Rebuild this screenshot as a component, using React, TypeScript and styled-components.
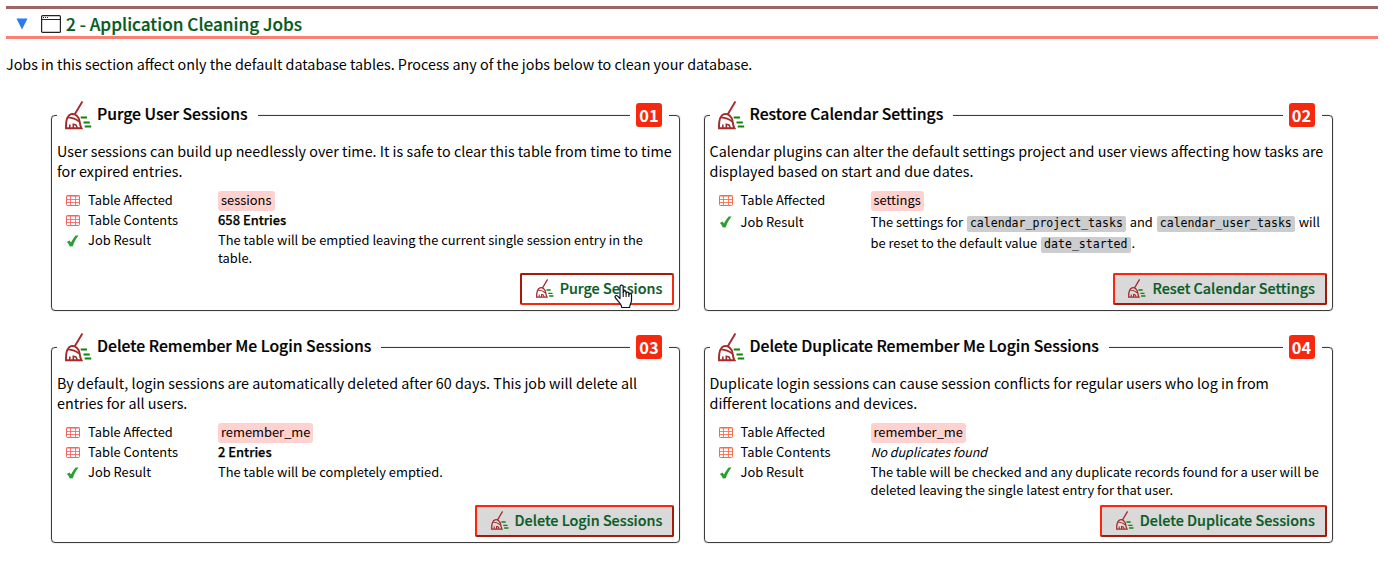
import React from 'react';
import styled, { createGlobalStyle } from 'styled-components';

const GlobalStyle = createGlobalStyle`
  * { box-sizing: border-box; }
  body {
    margin: 0;
    background: #fff;
    color: #000;
    font-family: "Noto Sans CJK SC", sans-serif;
    font-size: 14.33px;
    line-height: 20px;
  }
`;

const Page = styled.main`
  padding: 6px 6px 30px;
`;

const SectionHeader = styled.header`
  display: flex;
  align-items: center;
  height: 33px;
  padding-left: 9px;
  border-top: 3px solid #9c6666;
  border-bottom: 3px solid #fa8072;
`;

const Arrow = styled.svg`
  width: 12px;
  height: 12px;
  margin: 2px 13px 0 1px;
`;

const WindowGlyph = styled.svg`
  width: 20px;
  height: 18px;
  margin: 3px 5px 0 0;
`;

const SectionTitle = styled.h2`
  margin: 3px 0 0;
  font-size: 17.2px;
  font-weight: 500;
  line-height: 24px;
  color: #055a1c;
  -webkit-text-stroke: 0.2px;
`;

const Intro = styled.p`
  margin: 15px 0 0;
`;

const JobGrid = styled.section`
  display: grid;
  grid-template-columns: 629px 629px;
  grid-auto-rows: 196px;
  gap: 36px 23.5px;
  margin: 41px 0 0 45px;
`;

const Card = styled.article`
  display: flex;
  flex-direction: column;
  padding: 0 5px 5px;
  border: 1px solid #3c3c3c;
  border-radius: 4px;
  box-shadow: 0 0 1px rgba(0, 0, 0, 0.6);
`;

const CardHeader = styled.div`
  display: flex;
  justify-content: space-between;
  align-items: center;
  height: 36px;
  margin-top: -19px;
`;

const Legend = styled.h3`
  display: flex;
  align-items: center;
  gap: 5px;
  margin: 0;
  padding: 0 10px 0 8px;
  background: #fff;
  font-size: 15.76px;
  font-weight: 500;
  line-height: 22px;
  -webkit-text-stroke: 0.2px;

  span {
    padding-bottom: 2px;
  }
`;

const Badge = styled.div`
  padding: 0 7px 0 6px;
  margin-right: 5px;
  background: #fff;

  span {
    display: block;
    width: 26px;
    height: 24px;
    border-radius: 3px;
    background: #f6290f;
    color: #fff;
    font-size: 16.4px;
    font-weight: 700;
    line-height: 25px;
    text-align: center;
  }
`;

const Description = styled.p`
  margin: 8px 0 9px;
`;

const Facts = styled.dl`
  display: grid;
  grid-template-columns: 22px 130px 1fr;
  margin: 0;
  padding: 0 5px 0 9px;
  font-size: 12.9px;
  line-height: 18px;
`;

const FactIcon = styled.span<{ $offset?: number }>`
  display: flex;
  height: 20px;
  padding-top: ${(p) => p.$offset ?? 1}px;
  align-items: center;
`;

const FactLabel = styled.dt<{ $offset?: number }>`
  padding-top: ${(p) => p.$offset ?? 1}px;
`;

const FactValue = styled.dd<{ $tall?: boolean }>`
  min-height: 20px;
  margin: 0;
  padding-top: 1px;
  line-height: ${(p) => (p.$tall ? 21 : 18)}px;
`;

const Tag = styled.span`
  display: block;
  width: fit-content;
  height: 20px;
  margin-bottom: -1px;
  padding: 0 3px;
  border-radius: 3px;
  background: #ffd2cf;
  line-height: 18px;
`;

const Code = styled.code`
  display: inline-block;
  height: 16px;
  margin: 0 1px;
  padding: 0 3px;
  border-radius: 2px;
  background: #cccdce;
  font: 11.55px/15px "DejaVu Sans Mono", monospace;
`;

const Count = styled.strong`
  font-weight: 500;
  -webkit-text-stroke: 0.25px;
`;

const Remark = styled.em`
  font-size: 12.45px;
`;

const JobButton = styled.button<{ $hovered?: boolean }>`
  position: relative;
  display: flex;
  align-items: center;
  align-self: flex-end;
  gap: 6px;
  height: 32px;
  margin: auto 0 0;
  padding: 0 9.7px 0 13.8px;
  border: 2px solid;
  border-color: ${(p) =>
    p.$hovered ? '#a41b0a #f6290f #f6290f #a41b0a' : '#f6290f #a41b0a #a41b0a #f6290f'};
  border-radius: 2px;
  background: ${(p) => (p.$hovered ? '#fff' : '#d9d9d9')};
  color: #0a5c26;
  font: 500 14.35px/20px "Noto Sans CJK SC", sans-serif;
  white-space: nowrap;
  -webkit-text-stroke: 0.2px;

  span {
    padding-bottom: 2px;
  }
`;

const Pointer = styled.svg`
  position: absolute;
  left: 92px;
  top: 9px;
  width: 19px;
  height: 25px;
`;

const Broom = ({ size }: { size: number }) => (
  <svg width={size} height={(size * 29) / 27} viewBox="0 0 27 29" fill="none">
    <g stroke="#a52a2a" strokeWidth="1.9">
      <path d="M17.4.6 9.6 13.6" />
      <path d="M1 27.2C.8 20.5 2 14.6 6 13.2c4-1.200 7.800 2.200 8.600 7.200.3 3 .8 5 1.900 6.800z" />
      <path d="M3 16.400c4 .2 8 1.600 11.600 4.600M4.800 27v-3.600M8.300 27v-4.400M8.300 23.500c2.600-.4 3.600 1 3.700 3.500" strokeWidth="1.600" />
    </g>
    <path d="M15.700 16.500H22M18.500 21.500h6.300M19.700 25.500h6.500" stroke="#0a870a" strokeWidth="1.900" />
  </svg>
);

const TableGlyph = ({ color }: { color: string }) => (
  <svg width="14" height="11" viewBox="0 0 14 11" fill="none" stroke={color}>
    <rect x=".5" y=".5" width="13" height="10" rx="1" />
    <path d="M.5 1h13" />
    <path d="M.5 4.500h13M.5 7.500h13M4.500 1v9.500M9.500 1v9.500" strokeWidth=".85" />
  </svg>
);

const CheckGlyph = () => (
  <svg width="13" height="12" viewBox="0 0 13 12">
    <path d="M.8 7 3.600 5.500 5 7.600C6.400 4.800 8 2.200 9.700.5l2.900.1C10.200 3.300 8.200 7 6.800 11.300l-3 .3C3.100 9.700 2.300 8.300.8 7z" fill="#2b9e2f" />
  </svg>
);

type Fact = { icon: 'table' | 'check'; label: string; value: React.ReactNode; tall?: boolean };
type Job = {
  no: string;
  title: string;
  text: string;
  tint: string;
  facts: Fact[];
  action: string;
  hovered?: boolean;
};

const jobs: Job[] = [
  {
    no: '01',
    title: 'Purge User Sessions',
    tint: '#fa5f5f',
    text: 'User sessions can build up needlessly over time. It is safe to clear this table from time to time for expired entries.',
    facts: [
      { icon: 'table', label: 'Table Affected', value: <Tag>sessions</Tag> },
      { icon: 'table', label: 'Table Contents', value: <Count>658 Entries</Count> },
      { icon: 'check', label: 'Job Result', value: 'The table will be emptied leaving the current single session entry in the table.' },
    ],
    action: 'Purge Sessions',
    hovered: true,
  },
  {
    no: '02',
    title: 'Restore Calendar Settings',
    tint: '#fb6847',
    text: 'Calendar plugins can alter the default settings project and user views affecting how tasks are displayed based on start and due dates.',
    facts: [
      { icon: 'table', label: 'Table Affected', value: <Tag>settings</Tag> },
      {
        icon: 'check',
        label: 'Job Result',
        tall: true,
        value: (
          <>
            The settings for <Code>calendar_project_tasks</Code> and <Code>calendar_user_tasks</Code> will be reset to
            the default value <Code>date_started</Code>.
          </>
        ),
      },
    ],
    action: 'Reset Calendar Settings',
  },
  {
    no: '03',
    title: 'Delete Remember Me Login Sessions',
    tint: '#fa5f5f',
    text: 'By default, login sessions are automatically deleted after 60 days. This job will delete all entries for all users.',
    facts: [
      { icon: 'table', label: 'Table Affected', value: <Tag>remember_me</Tag> },
      { icon: 'table', label: 'Table Contents', value: <Count>2 Entries</Count> },
      { icon: 'check', label: 'Job Result', value: 'The table will be completely emptied.' },
    ],
    action: 'Delete Login Sessions',
  },
  {
    no: '04',
    title: 'Delete Duplicate Remember Me Login Sessions',
    tint: '#fb6847',
    text: 'Duplicate login sessions can cause session conflicts for regular users who log in from different locations and devices.',
    facts: [
      { icon: 'table', label: 'Table Affected', value: <Tag>remember_me</Tag> },
      { icon: 'table', label: 'Table Contents', value: <Remark>No duplicates found</Remark> },
      { icon: 'check', label: 'Job Result', value: 'The table will be checked and any duplicate records found for a user will be deleted leaving the single latest entry for that user.' },
    ],
    action: 'Delete Duplicate Sessions',
  },
];

const JobCard = ({ job }: { job: Job }) => (
  <Card>
    <CardHeader>
      <Legend>
        <Broom size={27} />
        <span>{job.title}</span>
      </Legend>
      <Badge>
        <span>{job.no}</span>
      </Badge>
    </CardHeader>
    <Description>{job.text}</Description>
    <Facts>
      {job.facts.map((f) => (
        <React.Fragment key={f.label}>
          <FactIcon $offset={f.tall ? 4 : 1}>
            {f.icon === 'table' ? <TableGlyph color={job.tint} /> : <CheckGlyph />}
          </FactIcon>
          <FactLabel $offset={f.tall ? 3 : 1}>{f.label}</FactLabel>
          <FactValue $tall={f.tall}>{f.value}</FactValue>
        </React.Fragment>
      ))}
    </Facts>
    <JobButton $hovered={job.hovered}>
      <Broom size={18} />
      <span>{job.action}</span>
      {job.hovered && (
        <Pointer viewBox="0 0 19 25">
          <path
            d="M6 14.500V2.600C6 .5 9.200.5 9.200 2.600v5.600c0-1.800 2.900-1.700 2.900.2v.8c.2-1.600 2.800-1.400 2.800.4v.8c.3-1.300 2.600-1.100 2.600.6v5.500c0 2.600-1.700 3.600-1.900 7H7.800C7.300 19.500 3.200 16.500 1.300 13.700c-1-1.700 1-2.900 2.300-1.600z"
            fill="#fff"
            stroke="#10131f"
            strokeWidth="1.200"
            strokeLinejoin="round"
          />
          <path d="M9.200 8v5M12.100 9v4M14.900 10v3" stroke="#10131f" strokeWidth="1.100" />
        </Pointer>
      )}
    </JobButton>
  </Card>
);

export default function App() {
  return (
    <Page>
      <GlobalStyle />
      <SectionHeader>
        <Arrow viewBox="0 0 12 12">
          <path d="M.5.5h11L6 11.500z" fill="#2a7bf0" />
        </Arrow>
        <WindowGlyph viewBox="0 0 20 18" fill="none" stroke="#222">
          <rect x=".6" y=".6" width="18.800" height="16.800" rx="1" strokeWidth="1.200" />
          <path d="M.6 4.500h18.800" />
          <path d="M2 2.500h5" strokeDasharray="1 1" />
        </WindowGlyph>
        <SectionTitle>2 - Application Cleaning Jobs</SectionTitle>
      </SectionHeader>
      <Intro>
        Jobs in this section affect only the default database tables. Process any of the jobs below to clean your
        database.
      </Intro>
      <JobGrid>
        {jobs.map((job) => (
          <JobCard key={job.no} job={job} />
        ))}
      </JobGrid>
    </Page>
  );
}
